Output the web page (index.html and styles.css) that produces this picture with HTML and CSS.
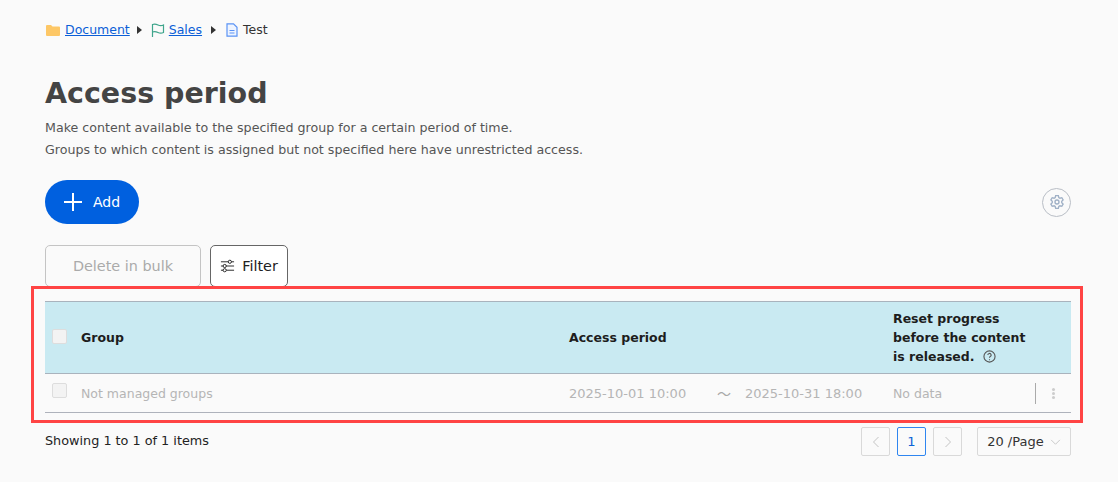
FILE: index.html
```html
<!DOCTYPE html>
<html lang="en">
<head>
  <meta charset="UTF-8" />
  <title>Access period</title>
  <link rel="stylesheet" href="styles.css">
</head>
<body>
  <nav class="crumbs">
    <svg class="crumb-icon folder" viewBox="0 0 14 14"><path fill="#fdc766" d="M0 3a1 1 0 0 1 1-1h4l1.500 1.500H13a1 1 0 0 1 1 1V12a1 1 0 0 1-1 1H1a1 1 0 0 1-1-1z"/></svg>
    <a href="#">Document</a>
    <span class="crumb-sep"></span>
    <svg class="crumb-icon" viewBox="0 0 14 14"><path fill="none" stroke="#3fa58c" stroke-width="1.200" d="M1.500 14V1.500C4 .5 5 1 7 2s3.500 1 5.500 0v7.500c-2 1-3.500 1-5.500 0s-3-1.500-5.500-.5"/></svg>
    <a href="#">Sales</a>
    <span class="crumb-sep wide"></span>
    <svg class="crumb-icon" viewBox="0 0 14 14"><path fill="#eef4ff" stroke="#5b93f5" stroke-width="1.200" d="M2 .8h6.500l3.500 3.500v8.900H2z"/><path stroke="#5b93f5" d="M4.500 7.500h5M4.500 10h5"/></svg>
    <span class="crumb-current">Test</span>
  </nav>

  <h1>Access period</h1>
  <p class="intro">Make content available to the specified group for a certain period of time.</p>
  <p class="intro">Groups to which content is assigned but not specified here have unrestricted access.</p>

  <div class="actions">
    <button class="add-btn">
      <svg viewBox="0 0 18 18"><path d="M9 0v18M0 9h18"/></svg>
      Add
    </button>
    <button class="gear-btn" aria-label="Settings">
      <svg viewBox="0 0 24 24"><circle cx="12" cy="12" r="3"/><path d="M10 2.500h4l.7 2.800 1.700 1 2.800-.8 2 3.500-2.100 2v2l2.100 2-2 3.500-2.800-.8-1.700 1-.7 2.800h-4l-.7-2.800-1.700-1-2.800.8-2-3.500 2.100-2v-2l-2.100-2 2-3.500 2.800.8 1.700-1z"/></svg>
    </button>
  </div>

  <div class="tools">
    <button class="bulk-btn" disabled>Delete in bulk</button>
    <button class="filter-btn">
      <svg viewBox="0 0 16 14"><path d="M1 2.500h14M1 7h14M1 11.500h14"/><circle cx="10.500" cy="2.500" r="1.700"/><circle cx="5" cy="7" r="1.700"/><circle cx="5" cy="11.500" r="1.700"/></svg>
      Filter
    </button>
  </div>

  <div class="table">
    <div class="row head">
      <div class="cell check"><span class="box"></span></div>
      <div class="cell group">Group</div>
      <div class="cell period">Access period</div>
      <div class="cell reset">Reset progress before the content is released.
        <svg class="help" viewBox="0 0 14 14"><circle cx="7" cy="7" r="6"/><path d="M5.200 5.500a1.800 1.800 0 1 1 2.600 1.600c-.6.300-.8.700-.8 1.300"/><path d="M7 10v1"/></svg>
      </div>
    </div>
    <div class="row body-row">
      <div class="cell check"><span class="box"></span></div>
      <div class="cell group">Not managed groups</div>
      <div class="cell period">
        <span class="date">2025-10-01 10:00</span>
        <span class="tilde">～</span>
        <span class="date">2025-10-31 18:00</span>
      </div>
      <div class="cell reset">No data</div>
      <div class="cell more"><span class="dots"></span></div>
    </div>
  </div>

  <div class="footer">
    <span class="count">Showing 1 to 1 of 1 items</span>
    <div class="pager">
      <button class="page-btn"><svg viewBox="0 0 8 12"><path d="M6.500 1 1.500 6l5 5"/></svg></button>
      <button class="page-btn current">1</button>
      <button class="page-btn"><svg viewBox="0 0 8 12"><path d="M1.500 1l5 5-5 5"/></svg></button>
      <button class="size-btn">20 /Page <svg viewBox="0 0 12 8"><path d="M1 1l5 5 5-5"/></svg></button>
    </div>
  </div>

  <div class="highlight"></div>
</body>
</html>
```

FILE: styles.css
```css
* { box-sizing: border-box; }
body {
  margin: 0;
  padding: 20px 47px 0 45px;
  background: #fafafa;
  font-family: 'DejaVu Sans', Verdana, sans-serif;
  font-size: 13px;
  color: #222;
  position: relative;
}
button { font-family: inherit; }
.crumbs {
  display: flex;
  align-items: center;
  height: 19px;
  font-size: 12.500px;
}
.crumbs a { color: #0b5ed7; }
.crumb-icon {
  width: 14px;
  height: 14px;
  margin-right: 4px;
}
.folder {
  margin-left: 1px;
  margin-right: 5px;
}
.crumb-sep {
  width: 0;
  height: 0;
  margin: 0 9px 0 7px;
  border-left: 5px solid #333;
  border-top: 4.500px solid transparent;
  border-bottom: 4.500px solid transparent;
}
.crumb-sep.wide { margin-left: 9px; }
.crumb-current { color: #333; }
h1 {
  font-size: 28.500px;
  line-height: 40px;
  font-weight: 700;
  color: #444;
  margin: 35px 0 3px;
}
.intro {
  margin: 0;
  font-size: 12.630px;
  line-height: 22px;
  color: #555;
}
.actions {
  display: flex;
  align-items: center;
  justify-content: space-between;
  margin-top: 19px;
}
.add-btn {
  display: flex;
  align-items: center;
  gap: 11px;
  width: 94px;
  height: 44px;
  padding: 0 0 0 19px;
  border: none;
  border-radius: 22px;
  background: #0060df;
  color: #fff;
  font-size: 14px;
}
.add-btn svg {
  width: 18px;
  height: 18px;
  stroke: #fff;
  stroke-width: 2;
}
.gear-btn {
  width: 29px;
  height: 29px;
  padding: 0;
  display: flex;
  align-items: center;
  justify-content: center;
  background: none;
  border: 1px solid #b9bec6;
  border-radius: 50%;
}
.gear-btn svg {
  width: 16px;
  height: 16px;
  fill: none;
  stroke: #9fb0c6;
  stroke-width: 2;
}
.tools {
  display: flex;
  gap: 9px;
  margin-top: 21px;
}
.bulk-btn, .filter-btn {
  height: 42px;
  border-radius: 5px;
  font-size: 14.400px;
  background: #fff;
}
.bulk-btn {
  width: 156px;
  border: 1px solid #c4c4c4;
  color: #aaa;
  background: transparent;
}
.filter-btn {
  width: 78px;
  padding: 0;
  display: flex;
  align-items: center;
  justify-content: center;
  gap: 7px;
  border: 1px solid #666;
  color: #222;
}
.filter-btn svg {
  width: 15px;
  height: 14px;
  stroke: #222;
  fill: #fff;
}
.table {
  margin-top: 14px;
  font-size: 12.500px;
}
.row {
  display: flex;
  align-items: center;
}
.head {
  height: 73px;
  background: #c9eaf2;
  border-top: 1px solid #a9b3bd;
  border-bottom: 1px solid #a9b3bd;
  font-weight: 700;
  color: #1d1d1d;
}
.body-row {
  height: 39px;
  border-bottom: 1px solid #aeb2bb;
  color: #b5b5b5;
}
.check {
  width: 36px;
  padding-left: 7px;
  display: flex;
}
.box {
  width: 15px;
  height: 15px;
  border: 1px solid #ddd;
  border-radius: 2px;
  background: #f3f3f3;
}
.head .box { margin-top: -3px; }
.body-row .box { margin-top: -5px; }
.group { width: 488px; }
.period {
  width: 324px;
  display: flex;
  align-items: center;
}
.date {
  font-size: 13px;
  width: 148px;
}
.period .date:last-child { width: auto; }
.tilde {
  width: 28px;
  font-family: 'Noto Sans CJK JP', sans-serif;
  font-size: 14px;
  color: #a8a8a8;
}
.reset {
  width: 142px;
  line-height: 19px;
}
.help {
  width: 13px;
  height: 13px;
  margin-left: 4px;
  vertical-align: -2px;
  fill: none;
  stroke: #555;
  stroke-width: 1.200;
}
.more {
  margin-left: auto;
  width: 36px;
  height: 21px;
  border-left: 1px solid #aaa;
  display: flex;
  align-items: center;
  justify-content: center;
}
.dots {
  width: 3px;
  height: 3px;
  border-radius: 50%;
  background: #ccc;
  box-shadow: 0 -4px 0 #ccc, 0 4px 0 #ccc;
}
.footer {
  display: flex;
  align-items: center;
  justify-content: space-between;
  margin-top: 14px;
}
.count {
  font-size: 12.800px;
  padding-bottom: 2px;
}
.pager {
  display: flex;
  gap: 7px;
}
.page-btn, .size-btn {
  height: 29px;
  padding: 0;
  background: none;
  border: 1px solid #d9d9d9;
  border-radius: 2px;
  font-size: 13px;
  color: #333;
}
.page-btn {
  width: 29px;
  display: flex;
  align-items: center;
  justify-content: center;
}
.page-btn svg {
  width: 8px;
  height: 12px;
  fill: none;
  stroke: #c4c4c4;
}
.page-btn.current {
  border-color: #2f86f0;
  color: #0b63d6;
}
.size-btn {
  width: 94px;
  margin-left: 8px;
}
.size-btn svg {
  width: 11px;
  height: 7px;
  margin-left: 2px;
  fill: none;
  stroke: #c4c4c4;
}
.highlight {
  position: absolute;
  left: 31px;
  top: 286px;
  width: 1052px;
  height: 137px;
  border: 3px solid #ff4444;
}
```
